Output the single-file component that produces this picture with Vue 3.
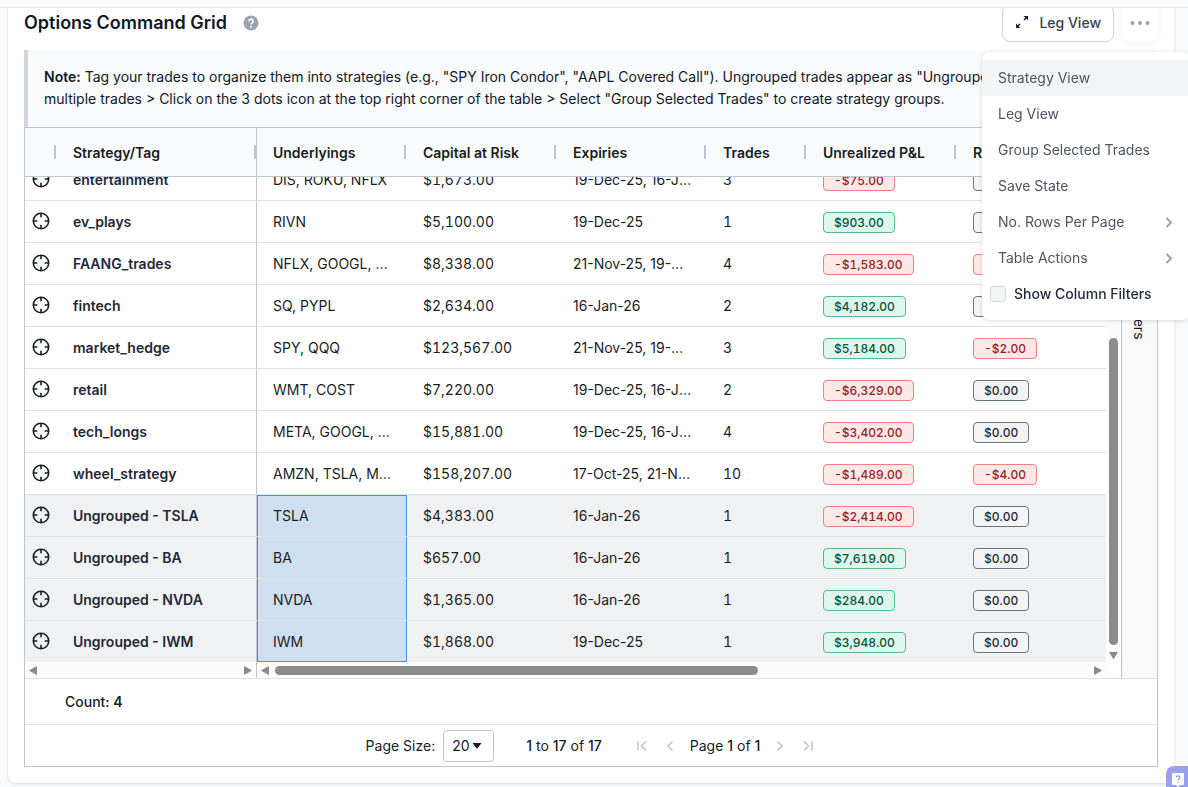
<template>
  <div class="page">
    <div class="topbar"></div>

    <main class="content">
      <section class="card">
        <header class="card-header">
          <h1 class="title">Options Command Grid</h1>
          <button class="help" type="button" aria-label="Help">
            <svg width="16" height="16" viewBox="0 0 16 16">
              <circle cx="8" cy="8" r="7.5" fill="#9ca3af" />
              <path d="M5.9 6.3a2.1 2 0 1 1 3.2 1.6c-.7.5-1.1.8-1.1 1.6" fill="none" stroke="#fff" stroke-width="1.6" />
              <circle cx="8" cy="11.7" r="1" fill="#fff" />
            </svg>
          </button>

          <div class="actions">
            <button class="view-button" type="button">
              <svg width="14" height="14" viewBox="0 0 14 14" fill="none" stroke="#1f2937" stroke-width="1.5">
                <path d="M9 5l3-3M5 9l-3 3" />
                <path d="M8.500 1H13v4.500zM5.500 13H1V8.500z" fill="#1f2937" stroke="none" />
              </svg>
              Leg View
            </button>
            <button class="more-button" type="button" aria-label="More" @click="menuOpen = !menuOpen">
              <svg width="20" height="4" viewBox="0 0 20 4" fill="#9ca3af">
                <circle cx="2.5" cy="2" r="2" />
                <circle cx="10" cy="2" r="2" />
                <circle cx="17.5" cy="2" r="2" />
              </svg>
            </button>

            <div v-if="menuOpen" class="menu">
              <button
                v-for="item in menuItems"
                :key="item.label"
                class="menu-item"
                :class="{ 'menu-item--active': item.active }"
                type="button"
              >
                {{ item.label }}
                <svg v-if="item.submenu" width="9" height="12" viewBox="0 0 9 12" fill="none" stroke="#9ca3af" stroke-width="2">
                  <path d="M1.500 2 6 6.500 1.500 11" />
                </svg>
              </button>
              <label class="menu-check">
                <input v-model="showFilters" type="checkbox" />
                <span>Show Column Filters</span>
              </label>
            </div>
          </div>
        </header>

        <p class="note">
          <strong>Note:</strong> Tag your trades to organize them into strategies (e.g., "SPY Iron Condor",
          "AAPL Covered Call"). Ungrouped trades appear as "Ungrouped - TICKER". Select multiple trades &gt; Click
          on the 3 dots icon at the top right corner of the table &gt; Select "Group Selected Trades" to create
          strategy groups.
        </p>

        <div class="grid">
          <div class="grid-body">
            <div class="grid-main">
              <div class="grid-rows">
                <div ref="viewport" class="viewport">
                  <table class="table">
                    <colgroup>
                      <col class="col-icon" />
                      <col class="col-strategy" />
                      <col class="col-wide" />
                      <col class="col-wide" />
                      <col class="col-wide" />
                      <col class="col-narrow" />
                      <col class="col-wide" />
                      <col class="col-wide" />
                    </colgroup>
                    <thead>
                      <tr>
                        <th v-for="(column, index) in columns" :key="index" :class="{ pinned: index === 1 }">
                          {{ column }}
                        </th>
                      </tr>
                    </thead>
                    <tbody>
                      <tr v-for="row in rows" :key="row.tag" :class="{ selected: row.selected }">
                        <td class="icon-cell">
                          <svg width="18" height="18" viewBox="0 0 18 18" fill="none" stroke="#181d1f" stroke-width="1.6">
                            <circle cx="9" cy="9" r="7.7" />
                            <path d="M9 1v4.300M9 12.700V17M1 9h4.300M12.700 9H17" />
                          </svg>
                        </td>
                        <td class="tag-cell pinned">{{ row.tag }}</td>
                        <td :class="{ range: row.selected }">{{ row.underlyings }}</td>
                        <td class="number-cell">{{ row.capital }}</td>
                        <td>{{ row.expiries }}</td>
                        <td class="number-cell">{{ row.trades }}</td>
                        <td class="number-cell badge-cell">
                          <span class="badge" :class="badgeClass(row.unrealized)">{{ formatMoney(row.unrealized) }}</span>
                        </td>
                        <td class="number-cell badge-cell">
                          <span class="badge" :class="badgeClass(row.realized)">{{ formatMoney(row.realized) }}</span>
                        </td>
                      </tr>
                    </tbody>
                  </table>
                </div>
                <div class="vscroll">
                  <div class="vscroll-head"></div>
                  <div class="vscroll-track"><div class="vscroll-thumb"></div></div>
                  <svg width="9" height="7" viewBox="0 0 9 7" fill="#8b8b8b"><path d="M1 0h7q1 0 .5 1L5 6.500q-.5.7-1 0L.5 1Q0 0 1 0z" /></svg>
                </div>
              </div>

              <div class="hscroll">
                <div class="hscroll-part hscroll-part--pinned">
                  <svg width="8" height="9" viewBox="0 0 8 9" fill="#8b8b8b"><path d="M8 1v7q0 1-1 .5L.7 5q-.7-.5 0-1L7 .5Q8 0 8 1z" /></svg>
                  <div class="hscroll-track"></div>
                  <svg width="8" height="9" viewBox="0 0 8 9" fill="#8b8b8b"><path d="M0 1v7q0 1 1 .5L7.300 5q.7-.5 0-1L1 .5Q0 0 0 1z" /></svg>
                </div>
                <div class="hscroll-part hscroll-part--center">
                  <svg width="8" height="9" viewBox="0 0 8 9" fill="#8b8b8b"><path d="M8 1v7q0 1-1 .5L.7 5q-.7-.5 0-1L7 .5Q8 0 8 1z" /></svg>
                  <div class="hscroll-track"><div class="hscroll-thumb"></div></div>
                  <svg width="8" height="9" viewBox="0 0 8 9" fill="#8b8b8b"><path d="M0 1v7q0 1 1 .5L7.300 5q.7-.5 0-1L1 .5Q0 0 0 1z" /></svg>
                </div>
                <div class="hscroll-corner"></div>
              </div>
            </div>

            <aside class="sidebar">
              <button class="side-button" type="button">Columns</button>
              <button class="side-button" type="button">Filters</button>
            </aside>
          </div>

          <div class="status">Count: <strong>4</strong></div>

          <div class="paging">
            <div class="page-size">
              <label for="page-size">Page Size:</label>
              <div class="select-wrap">
                <select id="page-size" v-model="pageSize">
                  <option v-for="size in [20, 50, 100]" :key="size" :value="size">{{ size }}</option>
                </select>
                <svg class="select-arrow" width="10" height="6" viewBox="0 0 10 6" fill="#181d1f"><path d="M.5 0h9L5 6z" /></svg>
              </div>
            </div>
            <div class="summary"><strong>1</strong> to <strong>17</strong> of <strong>17</strong></div>
            <div class="pager">
              <button type="button" aria-label="First page" disabled>
                <svg width="16" height="16" viewBox="0 0 16 16"><path d="M4 3.500v9M12 3.500 7.500 8l4.500 4.500" /></svg>
              </button>
              <button type="button" aria-label="Previous page" disabled>
                <svg width="16" height="16" viewBox="0 0 16 16"><path d="M10.500 3.500 6 8l4.500 4.500" /></svg>
              </button>
              <span>Page <strong>1</strong> of <strong>1</strong></span>
              <button type="button" aria-label="Next page" disabled>
                <svg width="16" height="16" viewBox="0 0 16 16"><path d="M5.500 3.500 10 8l-4.500 4.500" /></svg>
              </button>
              <button type="button" aria-label="Last page" disabled>
                <svg width="16" height="16" viewBox="0 0 16 16"><path d="M12 3.500v9M4 3.500 8.500 8 4 12.500" /></svg>
              </button>
            </div>
          </div>
        </div>
      </section>
    </main>

    <button class="support" type="button" aria-label="Support">
      <svg width="12" height="14" viewBox="0 0 12 14">
        <path d="M1 0h10q1 0 1 1v10q0 1-1 1H8l-2 2-2-2H1q-1 0-1-1V1q0-1 1-1z" fill="#fff" />
        <path d="M4.200 4.500a1.800 1.600 0 1 1 2.700 1.400Q6 6.400 6 7.300M6 8.500v1.200" fill="none" stroke="#8b95e6" stroke-width="1.2" />
      </svg>
    </button>
  </div>
</template>

<script setup>
import { onMounted, ref } from 'vue'

const menuOpen = ref(true)
const showFilters = ref(false)
const pageSize = ref(20)
const viewport = ref(null)

const menuItems = [
  { label: 'Strategy View', active: true },
  { label: 'Leg View' },
  { label: 'Group Selected Trades' },
  { label: 'Save State' },
  { label: 'No. Rows Per Page', submenu: true },
  { label: 'Table Actions', submenu: true },
]

const columns = [
  '',
  'Strategy/Tag',
  'Underlyings',
  'Capital at Risk',
  'Expiries',
  'Trades',
  'Unrealized P&L',
  'Realized P&L',
]

const rows = [
  { tag: 'entertainment', underlyings: 'DIS, ROKU, NFLX', capital: '$1,673.00', expiries: '19-Dec-25, 16-Jan-26', trades: 3, unrealized: -75, realized: 0 },
  { tag: 'ev_plays', underlyings: 'RIVN', capital: '$5,100.00', expiries: '19-Dec-25', trades: 1, unrealized: 903, realized: 0 },
  { tag: 'FAANG_trades', underlyings: 'NFLX, GOOGL, AMZN', capital: '$8,338.00', expiries: '21-Nov-25, 19-Dec-25', trades: 4, unrealized: -1583, realized: -3 },
  { tag: 'fintech', underlyings: 'SQ, PYPL', capital: '$2,634.00', expiries: '16-Jan-26', trades: 2, unrealized: 4182, realized: 0 },
  { tag: 'market_hedge', underlyings: 'SPY, QQQ', capital: '$123,567.00', expiries: '21-Nov-25, 19-Dec-25', trades: 3, unrealized: 5184, realized: -2 },
  { tag: 'retail', underlyings: 'WMT, COST', capital: '$7,220.00', expiries: '19-Dec-25, 16-Jan-26', trades: 2, unrealized: -6329, realized: 0 },
  { tag: 'tech_longs', underlyings: 'META, GOOGL, MSFT', capital: '$15,881.00', expiries: '19-Dec-25, 16-Jan-26', trades: 4, unrealized: -3402, realized: 0 },
  { tag: 'wheel_strategy', underlyings: 'AMZN, TSLA, MSFT', capital: '$158,207.00', expiries: '17-Oct-25, 21-Nov-25', trades: 10, unrealized: -1489, realized: -4 },
  { tag: 'Ungrouped - TSLA', underlyings: 'TSLA', capital: '$4,383.00', expiries: '16-Jan-26', trades: 1, unrealized: -2414, realized: 0, selected: true },
  { tag: 'Ungrouped - BA', underlyings: 'BA', capital: '$657.00', expiries: '16-Jan-26', trades: 1, unrealized: 7619, realized: 0, selected: true },
  { tag: 'Ungrouped - NVDA', underlyings: 'NVDA', capital: '$1,365.00', expiries: '16-Jan-26', trades: 1, unrealized: 284, realized: 0, selected: true },
  { tag: 'Ungrouped - IWM', underlyings: 'IWM', capital: '$1,868.00', expiries: '19-Dec-25', trades: 1, unrealized: 3948, realized: 0, selected: true },
]

function formatMoney(value) {
  return new Intl.NumberFormat('en-US', { style: 'currency', currency: 'USD' }).format(value)
}

function badgeClass(value) {
  if (value > 0) return 'badge--gain'
  if (value < 0) return 'badge--loss'
  return 'badge--flat'
}

onMounted(() => {
  viewport.value.scrollTop = 18
})
</script>

<style>
body {
  background: #f9fafb;
}
</style>

<style scoped>
.page {
  font-family: Inter, "Liberation Sans", sans-serif;
  font-size: 14px;
  color: #181d1f;
}

.page * {
  box-sizing: border-box;
}

button,
select {
  font: inherit;
  color: inherit;
}

svg {
  display: block;
  flex: none;
}

strong {
  font-weight: 600;
}

.topbar {
  position: sticky;
  top: 0;
  z-index: 10;
  height: 8px;
  background: #f9fafb;
  border-bottom: 1px solid #e5e7eb;
}

.content {
  padding: 0 14px 4px 8px;
}

.card {
  margin-top: -8px;
  padding: 4px 16px 16px;
  background: #fff;
  border-radius: 8px;
  box-shadow: 0 1px 3px rgba(0, 0, 0, 0.15);
}

.card-header {
  display: flex;
  align-items: center;
  height: 38px;
  margin-bottom: 8px;
}

.title {
  margin: 0;
  font-size: 18px;
  line-height: 28px;
  font-weight: 600;
  color: #111827;
}

.help {
  margin-left: 16px;
  padding: 0;
  border: 0;
  background: none;
}

.actions {
  position: relative;
  display: flex;
  gap: 8px;
  margin-left: auto;
}

.view-button {
  display: flex;
  align-items: center;
  gap: 10px;
  height: 38px;
  padding: 0 12px 2px;
  border: 1px solid #d1d5db;
  border-radius: 8px;
  background: #fff;
  font-weight: 500;
  color: #374151;
}

.more-button {
  display: flex;
  align-items: center;
  justify-content: center;
  width: 36px;
  height: 38px;
  padding: 0;
  border: 0;
  border-radius: 8px;
  background: #fff;
  box-shadow: 0 0 0 3px #f9fafb;
}

.menu {
  position: absolute;
  top: 48px;
  right: -32px;
  z-index: 5;
  width: 208px;
  padding: 8px 0;
  background: #fff;
  border-radius: 8px;
  box-shadow: 0 1px 4px rgba(0, 0, 0, 0.15);
}

.menu-item {
  display: flex;
  align-items: center;
  justify-content: space-between;
  width: 100%;
  height: 36px;
  padding: 0 16px 1px;
  border: 0;
  background: none;
  color: #4b5563;
}

.menu-item--active {
  background: #f3f4f6;
}

.menu-check {
  display: flex;
  align-items: center;
  gap: 8px;
  height: 36px;
  padding: 0 8px;
  font-weight: 500;
  color: #1f2937;
}

.menu-check span {
  padding-bottom: 1px;
}

.menu-check input {
  appearance: none;
  width: 16px;
  height: 16px;
  margin: 0;
  border: 1px solid #d1d5db;
  border-radius: 4px;
  background: #f3f4f6;
}

.note {
  margin: 0;
  padding: 16px 16px 17px;
  border-left: 4px solid #d1d5db;
  background: #f9fafb;
  line-height: 22px;
  color: #111827;
}

.grid {
  border: 1px solid #bdc5d3;
  background: #fff;
}

.grid-body {
  display: flex;
  border-bottom: 1px solid #dde2eb;
}

.grid-main {
  flex: 1;
  min-width: 0;
}

.grid-rows {
  display: flex;
  height: 534px;
}

.viewport {
  flex: 1;
  min-width: 0;
  overflow: auto;
  scrollbar-width: none;
}

.table {
  width: 100%;
  min-width: 1082px;
  table-layout: fixed;
  border-collapse: separate;
  border-spacing: 0;
}

.col-icon {
  width: 32px;
}

.col-strategy {
  width: 200px;
}

.col-wide {
  width: 150px;
}

.col-narrow {
  width: 100px;
}

th {
  position: sticky;
  top: 0;
  z-index: 1;
  height: 49px;
  padding: 0 16px;
  background: #f9fafb;
  border-bottom: 1px solid #bdc5d3;
  text-align: left;
  font-weight: 600;
  white-space: nowrap;
}

th::after {
  content: "";
  position: absolute;
  top: 17px;
  right: 1px;
  width: 2px;
  height: 14px;
  background: #bdc5d3;
}

th.pinned::after {
  right: 0;
}

td {
  height: 42px;
  padding: 0 16px;
  border-bottom: 1px solid #dde2eb;
  overflow: hidden;
  text-overflow: ellipsis;
  white-space: nowrap;
}

.pinned {
  border-right: 1px solid #bdc5d3;
}

.icon-cell {
  padding: 0 7px 2px;
}

.tag-cell {
  font-weight: 600;
  color: #1f2937;
}

.number-cell {
  font-variant-numeric: tabular-nums;
}

.badge-cell {
  padding-top: 1px;
}

.selected td {
  background: #f0f1f3;
}

.selected td.range {
  background: #cfdff2;
  box-shadow: inset 1px 0 #4a90e2, inset -1px 0 #4a90e2;
}

tr:not(.selected) + .selected td.range {
  box-shadow: inset 1px 0 #4a90e2, inset -1px 0 #4a90e2, inset 0 1px #4a90e2;
}

.selected:last-child td.range {
  box-shadow: inset 1px 0 #4a90e2, inset -1px 0 #4a90e2, inset 0 -1px #4a90e2;
}

.badge {
  display: inline-block;
  padding: 1px 10px 0;
  border: 1px solid;
  border-radius: 4px;
  font-size: 12px;
  line-height: 18px;
  font-weight: 500;
  vertical-align: middle;
}

.badge--gain {
  background: #def7ec;
  border-color: #4fc08d;
  color: #03543f;
}

.badge--loss {
  background: #fde8e8;
  border-color: #f08080;
  color: #9b1c1c;
}

.badge--flat {
  background: #f3f4f6;
  border-color: #6b7280;
  color: #1f2937;
}

.vscroll {
  display: flex;
  flex-direction: column;
  align-items: center;
  width: 15px;
  padding-bottom: 3px;
  background: #fcfcfc;
}

.vscroll-head {
  width: 100%;
  height: 49px;
  background: #f9fafb;
  border-bottom: 1px solid #bdc5d3;
}

.vscroll-track {
  display: flex;
  flex-direction: column;
  justify-content: flex-end;
  flex: 1;
  padding: 17px 0 7px;
}

.vscroll-thumb {
  width: 9px;
  height: 68%;
  border-radius: 5px;
  background: #8b8b8b;
}

.hscroll {
  display: flex;
  height: 16px;
}

.hscroll-part {
  display: flex;
  align-items: center;
  gap: 6px;
  padding: 0 4px;
  background: #fcfcfc;
}

.hscroll-part--pinned {
  width: 232px;
  border-right: 1px solid #bdc5d3;
}

.hscroll-part--center {
  flex: 1;
}

.hscroll-track {
  flex: 1;
}

.hscroll-thumb {
  width: 59.4%;
  height: 9px;
  border-radius: 5px;
  background: #8b8b8b;
}

.hscroll-corner {
  width: 15px;
}

.sidebar {
  display: flex;
  flex-direction: column;
  width: 36px;
  padding-top: 21px;
  border-left: 1px solid #bdc5d3;
  background: #fafafa;
}

.side-button {
  padding: 36px 8px 20px;
  border: 0;
  background: none;
  line-height: 19px;
  text-align: right;
  writing-mode: vertical-rl;
}

.status {
  height: 46px;
  padding: 0 40px;
  border-bottom: 1px solid #dde2eb;
  line-height: 46px;
  font-weight: 500;
}

.paging {
  display: flex;
  align-items: center;
  justify-content: center;
  gap: 32px;
  height: 41px;
}

.paging strong {
  font-weight: 500;
}

.page-size {
  display: flex;
  align-items: center;
  gap: 8px;
}

.select-wrap {
  position: relative;
}

.select-wrap select {
  display: block;
  appearance: none;
  width: 51px;
  height: 32px;
  padding: 0 8px;
  border: 1px solid #bdc5d3;
  border-radius: 4px;
  background: #fff;
}

.select-arrow {
  position: absolute;
  top: 13px;
  right: 12px;
  pointer-events: none;
}

.pager {
  display: flex;
  align-items: center;
  gap: 12px;
}

.pager button {
  padding: 0;
  border: 0;
  background: none;
}

.pager svg {
  fill: none;
  stroke: #bfc1c4;
  stroke-width: 1.5;
}

.support {
  position: fixed;
  right: 0;
  bottom: 0;
  display: flex;
  width: 22px;
  height: 21px;
  padding: 7px 4px 0 6px;
  border: 0;
  border-radius: 8px 0 0 0;
  background: #98a1ea;
}
</style>
